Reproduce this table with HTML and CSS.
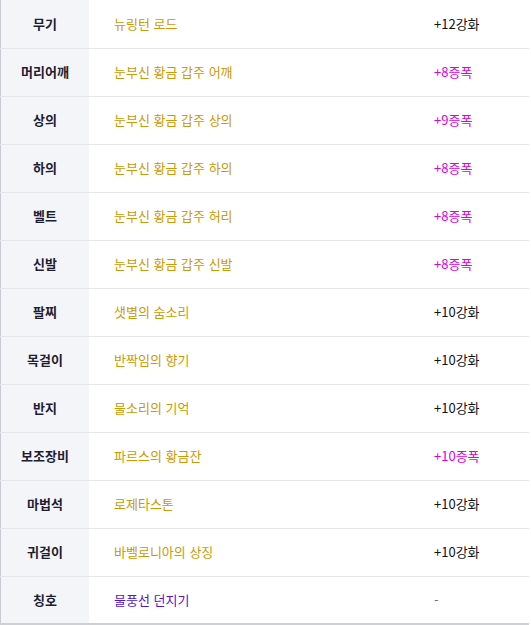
FILE: index.html
```html
<!DOCTYPE html>
<html lang="ko">
<head>
  <meta charset="UTF-8">
  <meta name="viewport" content="width=device-width, initial-scale=1.0">
  <title>장비 정보</title>
  <link rel="stylesheet" href="styles.css">
</head>
<body>
  <table class="equip">
    <tr><th>무기</th><td class="name">뉴링턴 로드</td><td class="lv">+12강화</td></tr>
    <tr><th>머리어깨</th><td class="name">눈부신 황금 갑주 어깨</td><td class="lv amp">+8증폭</td></tr>
    <tr><th>상의</th><td class="name">눈부신 황금 갑주 상의</td><td class="lv amp">+9증폭</td></tr>
    <tr><th>하의</th><td class="name">눈부신 황금 갑주 하의</td><td class="lv amp">+8증폭</td></tr>
    <tr><th>벨트</th><td class="name">눈부신 황금 갑주 허리</td><td class="lv amp">+8증폭</td></tr>
    <tr><th>신발</th><td class="name">눈부신 황금 갑주 신발</td><td class="lv amp">+8증폭</td></tr>
    <tr><th>팔찌</th><td class="name">샛별의 숨소리</td><td class="lv">+10강화</td></tr>
    <tr><th>목걸이</th><td class="name">반짝임의 향기</td><td class="lv">+10강화</td></tr>
    <tr><th>반지</th><td class="name">물소리의 기억</td><td class="lv">+10강화</td></tr>
    <tr><th>보조장비</th><td class="name">파르스의 황금잔</td><td class="lv amp">+10증폭</td></tr>
    <tr><th>마법석</th><td class="name">로제타스톤</td><td class="lv">+10강화</td></tr>
    <tr><th>귀걸이</th><td class="name">바벨로니아의 상징</td><td class="lv">+10강화</td></tr>
    <tr><th>칭호</th><td class="name rare">물풍선 던지기</td><td class="lv none">-</td></tr>
  </table>
</body>
</html>
```

FILE: styles.css
```css
body {
  margin: 0;
  background-color: #fff;
  font-family: "Noto Sans CJK KR", "Noto Sans", sans-serif;
}
.equip {
  width: 529px;
  border-collapse: collapse;
  border-left: 1px solid #c9cad3;
  border-bottom: 2px solid #cfd0d6;
}
.equip tr {
  height: 48px;
}
.equip th,
.equip td {
  border-bottom: 1px solid #e6e6e8;
  padding: 0;
  font-size: 13px;
  line-height: 16px;
  vertical-align: middle;
}
.equip tr:last-child th,
.equip tr:last-child td {
  border-bottom: none;
}
.equip th {
  width: 88px;
  background-color: #f4f5f9;
  color: #1e1d30;
  font-weight: bold;
  text-align: center;
}
.equip .name {
  width: 320px;
  padding-left: 25px;
  color: #cc9900;
  text-align: left;
}
.equip .name.rare {
  color: #5a14c8;
}
.equip .lv {
  padding-left: 0;
  color: #111;
}
.equip .lv.amp {
  color: #dd00dd;
}
.equip .lv.none {
  color: #6f6f86;
}
```
